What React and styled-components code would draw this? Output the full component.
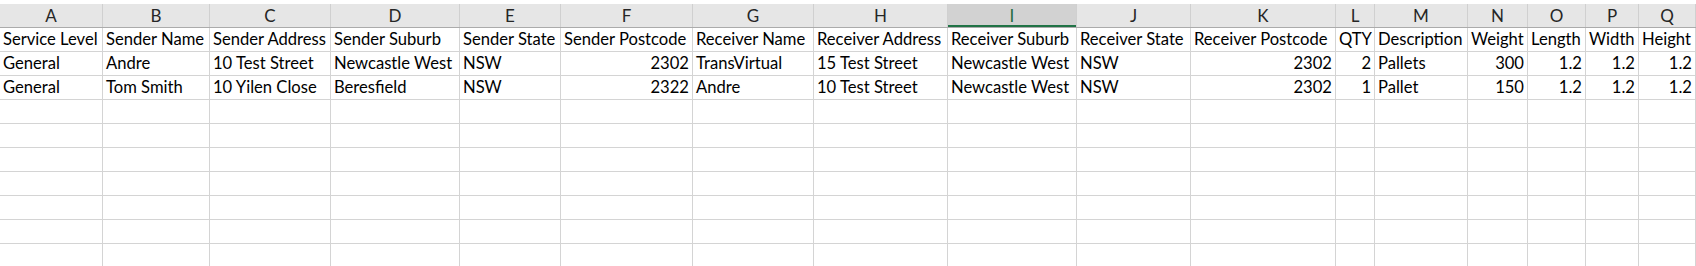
import React from 'react';
import styled, { createGlobalStyle } from 'styled-components';

const GlobalStyle = createGlobalStyle`
  html, body {
    margin: 0;
    padding: 0;
    background: #ffffff;
  }
  body {
    font-family: Lato, "Liberation Sans", sans-serif;
    overflow: hidden;
  }
`;

const columns = [
  { key: 'A', width: 103 },
  { key: 'B', width: 107 },
  { key: 'C', width: 121 },
  { key: 'D', width: 129 },
  { key: 'E', width: 101 },
  { key: 'F', width: 132 },
  { key: 'G', width: 121 },
  { key: 'H', width: 134 },
  { key: 'I', width: 129 },
  { key: 'J', width: 114 },
  { key: 'K', width: 145 },
  { key: 'L', width: 39 },
  { key: 'M', width: 93 },
  { key: 'N', width: 60 },
  { key: 'O', width: 58 },
  { key: 'P', width: 53 },
  { key: 'Q', width: 57 },
];

// numeric columns are right aligned, like Excel does
const rows = [
  ['Service Level', 'Sender Name', 'Sender Address', 'Sender Suburb', 'Sender State', 'Sender Postcode', 'Receiver Name', 'Receiver Address', 'Receiver Suburb', 'Receiver State', 'Receiver Postcode', 'QTY', 'Description', 'Weight', 'Length', 'Width', 'Height'],
  ['General', 'Andre', '10 Test Street', 'Newcastle West', 'NSW', 2302, 'TransVirtual', '15 Test Street', 'Newcastle West', 'NSW', 2302, 2, 'Pallets', 300, 1.2, 1.2, 1.2],
  ['General', 'Tom Smith', '10 Yilen Close', 'Beresfield', 'NSW', 2322, 'Andre', '10 Test Street', 'Newcastle West', 'NSW', 2302, 1, 'Pallet', 150, 1.2, 1.2, 1.2],
];

const EMPTY_ROWS = 8;
const SELECTED_COL = 'I';

const Sheet = styled.div`
  width: 1696px;
  height: 266px;
  padding-top: 4px;
  box-sizing: border-box;
  overflow: hidden;
`;

const Row = styled.div`
  display: grid;
  grid-template-columns: ${columns.map((c) => `${c.width}px`).join(' ')};
`;

const HeaderRow = styled(Row)`
  height: 23px;
  background: #e6e6e6;
  border-bottom: 1px solid #ababab;
`;

const HeaderCell = styled.div`
  display: flex;
  align-items: center;
  justify-content: center;
  font-size: 17px;
  color: ${(p) => (p.$selected ? '#1f6b41' : '#262626')};
  background: ${(p) => (p.$selected ? '#d2d2d2' : 'transparent')};
  border-right: 1px solid #d0d0d0;
  box-shadow: ${(p) => (p.$selected ? 'inset 0 -2px 0 #217346' : 'none')};
  box-sizing: border-box;
`;

const DataRow = styled(Row)`
  height: 24px;
`;

const Cell = styled.div`
  height: 24px;
  box-sizing: border-box;
  border-right: 1px solid #d4d4d4;
  border-bottom: 1px solid #d4d4d4;
  padding: 0 3px 0 3px;
  font-size: 16.6px;
  line-height: 23px;
  color: #000000;
  white-space: nowrap;
  overflow: hidden;
  text-align: ${(p) => (p.$numeric ? 'right' : 'left')};
`;

const App = () => {
  const blanks = Array.from({ length: EMPTY_ROWS }, () => columns.map(() => ''));

  return (
    <>
      <GlobalStyle />
      <Sheet>
        <HeaderRow>
          {columns.map((c) => (
            <HeaderCell key={c.key} $selected={c.key === SELECTED_COL}>
              {c.key}
            </HeaderCell>
          ))}
        </HeaderRow>
        {[...rows, ...blanks].map((row, i) => (
          <DataRow key={i}>
            {row.map((value, j) => (
              <Cell key={j} $numeric={typeof value === 'number'}>
                {value}
              </Cell>
            ))}
          </DataRow>
        ))}
      </Sheet>
    </>
  );
};

export default App;
